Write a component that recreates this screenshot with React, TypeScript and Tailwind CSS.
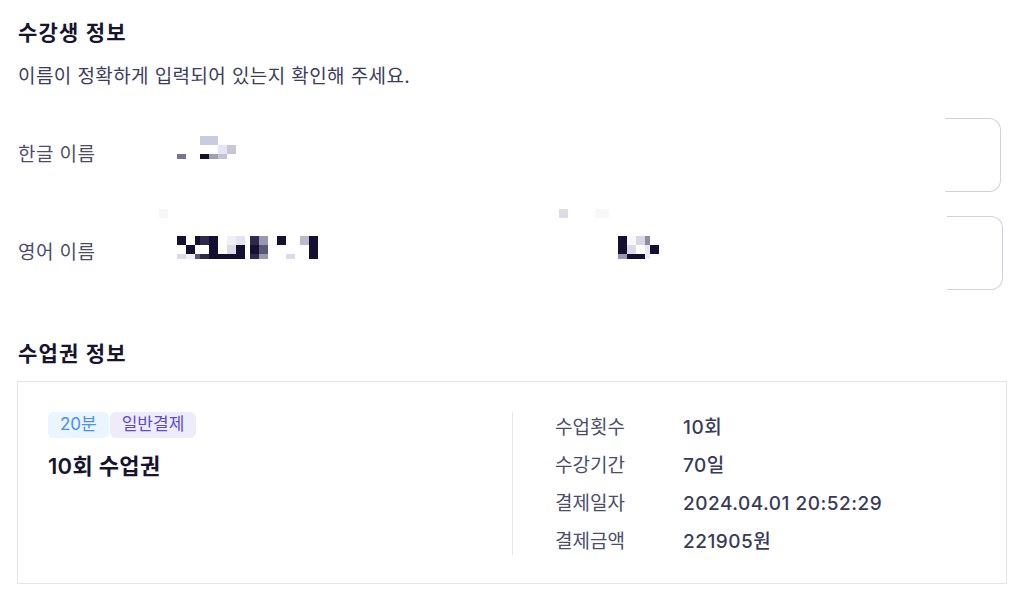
import React from "react";

type R = [number, number, number, number, string];

const D = "#150f33";
const rects: R[] = [
  // Korean name mosaic
  [200, 136, 18, 9, "#c9cbe0"],
  [218, 145, 9, 9, "#e4e5f2"],
  [227, 145, 9, 9, "#c7c6d5"],
  [177, 154, 9, 5, "#787594"],
  [200, 154, 9, 5, D],
  [209, 154, 9, 5, "#a19fb5"],
  [218, 154, 9, 5, "#c3c1d3"],
  // faint bits
  [159, 209, 9, 9, "#f7f7f8"],
  [559, 209, 9, 9, "#dcdce8"],
  [595, 209, 14, 9, "#f8f8f8"],
  // English row A
  [177, 236, 9, 9, D],
  [195, 236, 5, 9, D],
  [200, 236, 9, 9, "#2e2a4a"],
  [209, 236, 9, 9, D],
  [227, 236, 9, 9, "#f0f0f4"],
  [236, 236, 9, 9, "#e3e4f0"],
  [250, 236, 9, 9, "#2e2a4a"],
  [259, 236, 9, 9, "#9a98ae"],
  [277, 236, 9, 9, D],
  [300, 236, 9, 9, "#bcbacc"],
  [309, 236, 9, 9, D],
  [618, 236, 9, 9, D],
  [627, 236, 9, 9, "#f8f8fa"],
  [636, 236, 9, 9, "#d8d8e0"],
  [645, 236, 5, 9, "#8e8ca2"],
  // row B
  [186, 245, 9, 9, D],
  [209, 245, 9, 9, D],
  [227, 245, 9, 9, "#dcdce8"],
  [236, 245, 9, 9, D],
  [250, 245, 9, 9, D],
  [259, 245, 9, 9, "#5a5878"],
  [309, 245, 9, 9, D],
  [618, 245, 9, 9, D],
  [627, 245, 9, 9, "#dcdce8"],
  [645, 245, 5, 9, "#e8e8f0"],
  [650, 245, 9, 9, D],
  // row C
  [177, 254, 9, 5, "#dcdce8"],
  [186, 254, 9, 5, "#f0f0f4"],
  [195, 254, 5, 5, "#5a5878"],
  [200, 254, 9, 5, "#2e2a4a"],
  [209, 254, 36, 5, D],
  [250, 254, 9, 5, "#2e2a4a"],
  [259, 254, 9, 5, "#9a98ae"],
  [286, 254, 9, 5, "#dcdce8"],
  [309, 254, 9, 5, D],
  [618, 254, 9, 5, "#9a98ae"],
  [627, 254, 18, 5, D],
  [645, 254, 5, 5, "#e8e8f0"],
];

function Mosaic() {
  return (
    <svg
      className="pointer-events-none absolute left-0 top-0"
      width={1032}
      height={300}
      viewBox="0 0 1032 300"
      shapeRendering="crispEdges"
    >
      {rects.map(([x, y, w, h, c], i) => (
        <rect key={i} x={x} y={y} width={w} height={h} fill={c} />
      ))}
    </svg>
  );
}

function NameRow({ label, rightClass }: { label: string; rightClass: string }) {
  return (
    <div className="flex h-[74px] items-center">
      <div className="w-[147px] text-[19px] leading-[28px] tracking-[0.4px] text-[#4b4d6b]">{label}</div>
      <div className="flex-1" />
      <div
        className={`h-[74px] w-[56px] rounded-r-[12px] border-y border-r border-[#cfd0e3] ${rightClass}`}
      />
    </div>
  );
}

function InfoRow({ label, value }: { label: string; value: string }) {
  return (
    <div className="flex leading-[26px]">
      <div className="w-[128px] text-[19px] text-[#4b4d6b]">{label}</div>
      <div className="text-[19px] font-medium tracking-[0.5px] text-[#383a5c]">{value}</div>
    </div>
  );
}

export default function App() {
  return (
    <div
      className="relative min-h-[604px] w-[1032px] bg-white pl-[18px] pt-[19px]"
      style={{ fontFamily: 'Inter, "Noto Sans CJK KR", sans-serif' }}
    >
      <h2 className="text-[21px] font-bold leading-[28px] tracking-[1.2px] text-[#16142e]">수강생 정보</h2>
      <p className="mt-[16px] text-[19px] leading-[28px] tracking-[0.4px] text-[#3c3d5c]">
        이름이 정확하게 입력되어 있는지 확인해 주세요.
      </p>
      <div className="mt-[27px] flex flex-col gap-[24px]">
        <NameRow label="한글 이름" rightClass="mr-[31px]" />
        <NameRow label="영어 이름" rightClass="mr-[29px]" />
      </div>

      <h2 className="mt-[50px] text-[21px] font-bold leading-[28px] tracking-[1.2px] text-[#16142e]">
        수업권 정보
      </h2>
      <div className="-ml-[1px] mt-[13px] w-[990px] border border-[#e4e4f0] px-[30px] pb-[28px] pt-[30px]">
        <div className="grid grid-cols-2">
          <div>
            <div className="flex">
              <span className="flex h-[26px] items-center rounded-[6px] bg-[#e9f5ff] px-[12px] text-[17px] text-[#4a8ff5]">
                20분
              </span>
              <span className="ml-[1px] flex h-[26px] items-center rounded-[6px] bg-[#efecfa] px-[12px] text-[17px] text-[#5a4bd3]">
                일반결제
              </span>
            </div>
            <div className="mt-[14px] text-[22px] font-semibold leading-[28px] tracking-[0.3px] text-[#16142e]">
              10회 수업권
            </div>
          </div>
          <div className="flex flex-col gap-[12px] border-l border-[#e4e4f0] pl-[42px] pt-[3px]">
            <InfoRow label="수업횟수" value="10회" />
            <InfoRow label="수강기간" value="70일" />
            <InfoRow label="결제일자" value="2024.04.01 20:52:29" />
            <InfoRow label="결제금액" value="221905원" />
          </div>
        </div>
      </div>
      <Mosaic />
    </div>
  );
}
